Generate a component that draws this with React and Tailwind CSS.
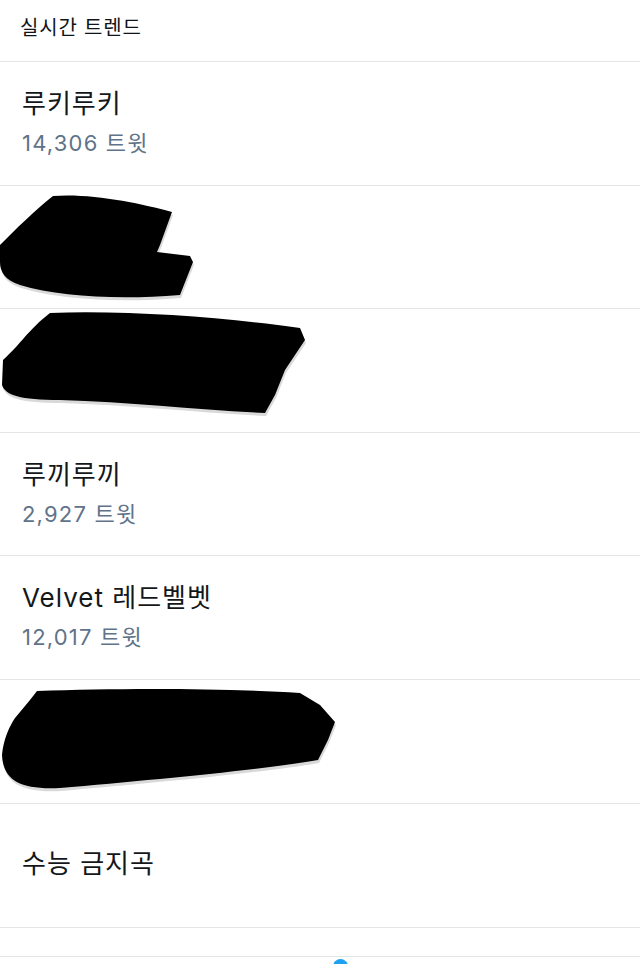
import React from "react";

const font = { fontFamily: 'Inter, "Noto Sans CJK KR", "Noto Sans", sans-serif' };

function TrendRow({ title, count }) {
  return (
    <div className="h-[123.6px] border-b border-[#e4e5e8] pl-[22px] pt-[26px]">
      {title && (
        <div className="text-[26px] leading-[32px] tracking-[1px] text-[#14171a]">{title}</div>
      )}
      {count && (
        <div className="mt-[9px] text-[22px] leading-[28px] tracking-[1.2px] text-[#5f7389]">{count}</div>
      )}
    </div>
  );
}

export default function App() {
  return (
    <div className="relative w-[640px] h-[964px] overflow-hidden bg-white" style={font}>
      <div className="h-[62px] border-b border-[#e4e5e8] pl-[20px] flex items-center">
        <span className="text-[20px] font-normal tracking-[0.8px] text-[#0f1419] -mt-[6px]">실시간 트렌드</span>
      </div>
      <TrendRow title="루키루키" count="14,306 트윗" />
      <TrendRow />
      <TrendRow />
      <TrendRow title="루끼루끼" count="2,927 트윗" />
      <TrendRow title="Velvet 레드벨벳" count="12,017 트윗" />
      <TrendRow />
      <div className="h-[124px] border-b border-[#e4e5e8] pl-[22px] flex items-center">
        <span className="text-[26px] leading-[32px] tracking-[1px] text-[#14171a] -mt-[2px]">수능 금지곡</span>
      </div>
      <div className="h-[29px] border-b border-[#e4e5e8]"></div>
      <div className="relative h-[20px]">
        <div className="absolute left-[333px] top-[2px] w-[15px] h-[15px] rounded-full bg-[#1da1f2]"></div>
      </div>

      <svg className="absolute left-0 top-0 pointer-events-none" width="640" height="964" viewBox="0 0 640 964">
        <g fill="#d9d9d9" transform="translate(1,3)">
          <path d="M53,196 C90,193 140,203 172,212 L160,245 L157,252 L190,256 L193,262 L180,295 C120,300 60,297 20,285 C5,280 0,272 0,262 L0,245 C15,230 35,210 53,196 Z" />
          <path d="M50,313 C130,310 230,318 300,328 L305,340 L285,370 L275,395 L265,413 C200,410 130,402 60,400 C20,400 5,395 2,385 L3,360 C20,345 28,330 50,313 Z" />
          <path d="M37,691 C120,688 220,688 300,693 L320,705 L335,722 L328,740 L318,760 C260,770 150,780 60,788 C20,790 3,780 2,755 C3,740 10,725 15,718 L30,700 Z" />
        </g>
        <g fill="#000">
          <path d="M53,196 C90,193 140,203 172,212 L160,245 L157,252 L190,256 L193,262 L180,295 C120,300 60,297 20,285 C5,280 0,272 0,262 L0,245 C15,230 35,210 53,196 Z" />
          <path d="M50,313 C130,310 230,318 300,328 L305,340 L285,370 L275,395 L265,413 C200,410 130,402 60,400 C20,400 5,395 2,385 L3,360 C20,345 28,330 50,313 Z" />
          <path d="M37,691 C120,688 220,688 300,693 L320,705 L335,722 L328,740 L318,760 C260,770 150,780 60,788 C20,790 3,780 2,755 C3,740 10,725 15,718 L30,700 Z" />
        </g>
      </svg>
    </div>
  );
}
